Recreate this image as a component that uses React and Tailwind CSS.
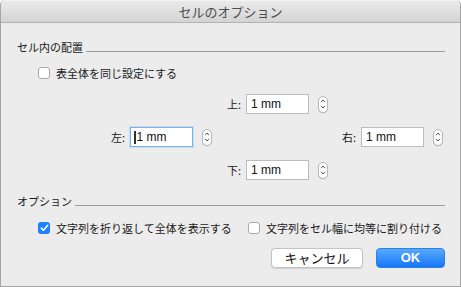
import React from 'react';

const jp = { fontFamily: '"Noto Sans CJK JP", "Noto Sans", sans-serif' };

const Stepper = () => (
  <div className="w-[10px] h-[17px] rounded-full border border-[#b8b8b8] bg-white shadow-[0_0.5px_0.5px_rgba(0,0,0,0.15)] flex flex-col items-center justify-center gap-[2px]">
    <svg width="6" height="4" viewBox="0 0 6 4">
      <path d="M1 3.2 L3 1 L5 3.2" fill="none" stroke="#555" strokeWidth="1" />
    </svg>
    <svg width="6" height="4" viewBox="0 0 6 4">
      <path d="M1 0.8 L3 3 L5 0.8" fill="none" stroke="#555" strokeWidth="1" />
    </svg>
  </div>
);

const Field = ({ label, focused }) => (
  <div className="flex items-center">
    <span className="w-[20px] text-right text-[11px] leading-[13px] text-[#1a1a1a]" style={jp}>
      {label}
    </span>
    <div
      className={
        'ml-[5px] w-[63px] h-[20px] bg-white flex items-center pl-[4px] text-[12px] text-[#111] ' +
        (focused ? 'border border-[#7eb1e6] shadow-[0_0_0_1px_#c5dcf3]' : 'border border-[#bdbdbd]')
      }
      style={{ fontFamily: '"Liberation Sans", Arial, sans-serif' }}
    >
      {focused && <span className="w-[1.5px] h-[13px] bg-[#333] mr-[1px] -ml-[1px]" />}
      <span>1 mm</span>
    </div>
    <div className="ml-[9px]">
      <Stepper />
    </div>
  </div>
);

const Checkbox = ({ checked, label }) => (
  <div className="flex items-center h-[14px]">
    {checked ? (
      <div className="w-[12px] h-[12px] rounded-[3px] bg-[#1b82f9] flex items-center justify-center">
        <svg width="9" height="8" viewBox="0 0 9 8">
          <path d="M1.3 4.2 L3.5 6.3 L7.7 1.3" fill="none" stroke="white" strokeWidth="1.6" strokeLinecap="round" strokeLinejoin="round" />
        </svg>
      </div>
    ) : (
      <div className="w-[12px] h-[12px] rounded-[3px] bg-white border border-[#a9a9a9]" />
    )}
    <span className="ml-[6px] text-[11px] leading-[13px] text-[#1a1a1a]" style={jp}>
      {label}
    </span>
  </div>
);

const Heading = ({ children }) => (
  <div className="flex items-end">
    <span className="text-[11px] leading-[13px] text-[#1a1a1a]" style={jp}>
      {children}
    </span>
    <div className="flex-1 ml-[3px] mb-[2px] border-b border-[#9c9c9c]" />
  </div>
);

export default function App() {
  return (
    <div className="w-[461px] h-[287px] bg-[#ececec] border-x border-b border-[#a5a5a5] rounded-t-[5px] overflow-hidden flex flex-col">
      <div
        className="h-[23px] border-b border-[#b2b2b2] border-t border-t-[#f4f4f4] rounded-t-[5px] bg-gradient-to-b from-[#eaeaea] to-[#d4d4d4] flex items-center justify-center text-[13px] text-[#4d4d4d]"
        style={jp}
      >
        セルのオプション
      </div>
      <div className="pt-[18px] pl-[16px] pr-[15px] flex flex-col">
        <Heading>セル内の配置</Heading>
        <div className="mt-[12px] ml-[21px]">
          <Checkbox label="表全体を同じ設定にする" />
        </div>
        <div className="mt-[14px] ml-[204px]">
          <Field label="上:" />
        </div>
        <div className="mt-[13px] ml-[88px] flex">
          <Field label="左:" focused />
          <div className="ml-[124px]">
            <Field label="右:" />
          </div>
        </div>
        <div className="mt-[13px] ml-[204px]">
          <Field label="下:" />
        </div>
        <div className="mt-[15px]">
          <Heading>オプション</Heading>
        </div>
        <div className="mt-[13px] ml-[21px] flex">
          <div className="w-[210px]">
            <Checkbox checked label="文字列を折り返して全体を表示する" />
          </div>
          <Checkbox label="文字列をセル幅に均等に割り付ける" />
        </div>
        <div className="mt-[13px] flex justify-end gap-[13px]" style={jp}>
          <button className="w-[92px] h-[20px] rounded-[4px] bg-white border border-[#c3c3c3] shadow-[0_0.5px_1px_rgba(0,0,0,0.12)] text-[13px] leading-[18px] text-[#111]">
            キャンセル
          </button>
          <button
            className="w-[69px] h-[20px] rounded-[4px] bg-gradient-to-b from-[#56a9ff] to-[#1276f6] border border-[#2a7fe8] text-[13px] leading-[18px] font-bold text-white"
            style={{ fontFamily: '"Liberation Sans", Arial, sans-serif' }}
          >
            OK
          </button>
        </div>
      </div>
    </div>
  );
}
